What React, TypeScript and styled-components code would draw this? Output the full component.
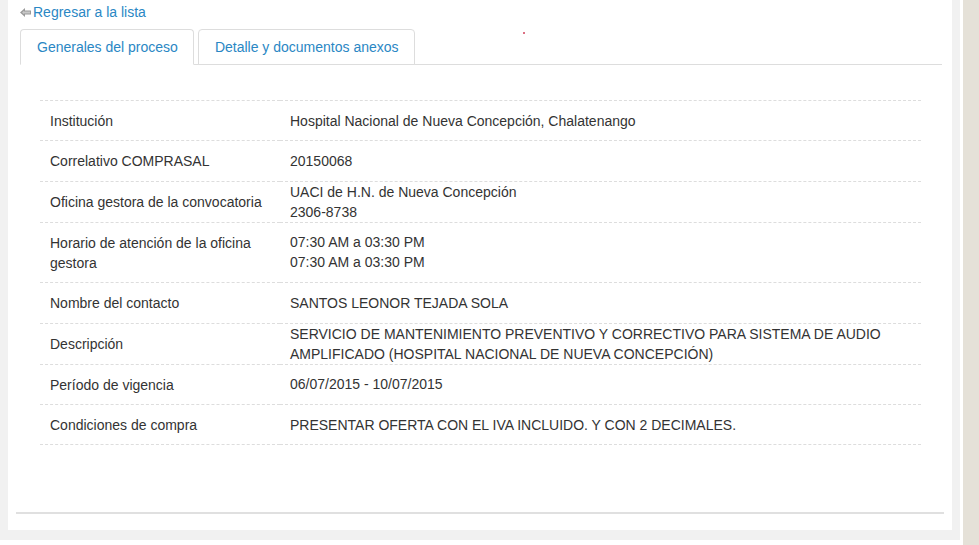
import React from "react";
import styled, { createGlobalStyle } from "styled-components";

const GlobalStyle = createGlobalStyle`
  html, body { margin: 0; padding: 0; background: #ffffff; }
  body { font-family: "Liberation Sans", Arial, sans-serif; font-size: 14px; color: #333333; }
  * { box-sizing: border-box; }
`;

const Page = styled.div`
  display: flex;
  width: 979px;
  height: 545px;
  overflow: hidden;
`;

const Frame = styled.div`
  width: 960px;
  height: 540px;
  background: #f1f1f1;
  padding: 0 8px 10px 8px;
  flex: none;
`;

const Track = styled.div`
  width: 16px;
  height: 545px;
  margin-left: 3px;
  background: #e5e1d8;
  flex: none;
`;

const Panel = styled.div`
  position: relative;
  height: 530px;
  background: #ffffff;
  padding: 0 8px;
  display: flex;
  flex-direction: column;
`;

const Content = styled.div`
  padding: 0 2px 0 4px;
`;

const BackLink = styled.a`
  display: flex;
  align-items: center;
  gap: 2px;
  height: 24px;
  color: #2a87c4;
  text-decoration: none;
  line-height: 20px;
  font-size: 14px;
`;

const Tabs = styled.div`
  display: flex;
  gap: 4px;
  margin-top: 5px;
  border-bottom: 1px solid #dddddd;
  height: 36px;
`;

const Tab = styled.div<{ $active?: boolean }>`
  height: 36px;
  padding: 0 15px 0 16px;
  display: flex;
  align-items: center;
  color: #2a87c4;
  font-size: 14px;
  border: 1px solid #dddddd;
  border-bottom-color: ${(p) => (p.$active ? "#ffffff" : "#dddddd")};
  border-radius: 4px 4px 0 0;
  background: #ffffff;
`;

const TabBody = styled.div`
  padding: 35px 21px 0 20px;
`;

const Table = styled.table`
  width: 100%;
  border-collapse: collapse;
  font-size: 14px;
  line-height: 20px;
  color: #333333;
`;

const Row = styled.tr`
  border-top: 1px dashed #dddddd;
  &:last-child { border-bottom: 1px dashed #dddddd; }
`;

const Label = styled.td`
  width: 240px;
  padding: 10px 10px 9.4px;
  vertical-align: middle;
`;

const Value = styled.td`
  padding: 0 10px;
  vertical-align: middle;
`;

const Rule = styled.div`
  margin-top: auto;
  margin-bottom: 16px;
  height: 2px;
  background: #e0e0e0;
`;

const Dot = styled.span`
  position: absolute;
  left: 515px;
  top: 32px;
  width: 2px;
  height: 2px;
  background: #d0405a;
  border-radius: 1px;
`;

const rows: { label: string; value: string[] }[] = [
  { label: "Institución", value: ["Hospital Nacional de Nueva Concepción, Chalatenango"] },
  { label: "Correlativo COMPRASAL", value: ["20150068"] },
  { label: "Oficina gestora de la convocatoria", value: ["UACI de H.N. de Nueva Concepción", "2306-8738"] },
  { label: "Horario de atención de la oficina gestora", value: ["07:30 AM a 03:30 PM", "07:30 AM a 03:30 PM"] },
  { label: "Nombre del contacto", value: ["SANTOS LEONOR TEJADA SOLA"] },
  {
    label: "Descripción",
    value: [
      "SERVICIO DE MANTENIMIENTO PREVENTIVO Y CORRECTIVO PARA SISTEMA DE AUDIO AMPLIFICADO (HOSPITAL NACIONAL DE NUEVA CONCEPCIÓN)",
    ],
  },
  { label: "Período de vigencia", value: ["06/07/2015 - 10/07/2015"] },
  { label: "Condiciones de compra", value: ["PRESENTAR OFERTA CON EL IVA INCLUIDO. Y CON 2 DECIMALES."] },
];

const BackIcon = () => (
  <svg width="11" height="9" viewBox="0 0 11 9">
    <polygon points="0,4.5 5,0 5,2.5 11,2.5 11,6.5 5,6.5 5,9" fill="#9a9a9a" />
    <polygon points="2,4.5 4,2.8 4,3.5 10,3.5 10,5.5 4,5.5 4,6.2" fill="#c8c8c8" />
  </svg>
);

export default function App() {
  return (
    <Page>
      <GlobalStyle />
      <Frame>
        <Panel>
          <Dot />
          <Content>
            <BackLink href="#">
              <BackIcon />
              Regresar a la lista
            </BackLink>
            <Tabs>
              <Tab $active>Generales del proceso</Tab>
              <Tab>Detalle y documentos anexos</Tab>
            </Tabs>
            <TabBody>
              <Table>
                <tbody>
                  {rows.map((r) => (
                    <Row key={r.label}>
                      <Label>{r.label}</Label>
                      <Value>
                        {r.value.map((v, i) => (
                          <div key={i}>{v}</div>
                        ))}
                      </Value>
                    </Row>
                  ))}
                </tbody>
              </Table>
            </TabBody>
          </Content>
          <Rule />
        </Panel>
      </Frame>
      <Track />
    </Page>
  );
}
